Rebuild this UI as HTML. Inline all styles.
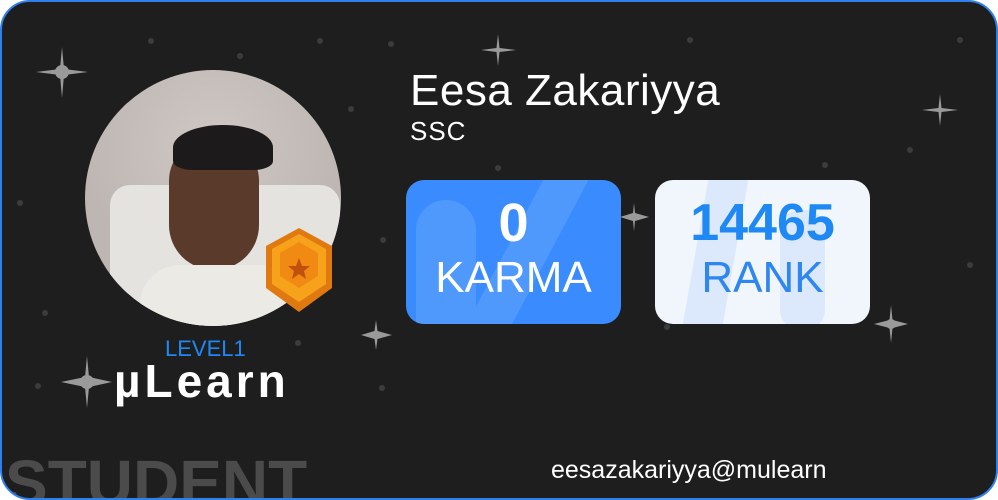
<!DOCTYPE html>
<html><head><meta charset="utf-8"><style>
*{margin:0;padding:0;box-sizing:border-box}
body{width:998px;height:500px;background:#fff;overflow:hidden;font-family:"Liberation Sans",sans-serif}
.card{position:absolute;left:0;top:0;width:998px;height:500px;background:#1e1e1e;border:2px solid #2f80ed;border-radius:30px;overflow:hidden}
.t{position:absolute;white-space:nowrap}
.box{position:absolute;top:178px;width:215px;height:144px;border-radius:18px;overflow:hidden;text-align:center}
</style></head><body>
<div class="card">
<svg width="998" height="500" style="position:absolute;left:-2px;top:-2px">
<g fill="#9a9a9a">
<path d="M62 47 L64 69 L88 72 L64 75 L62 98 L60 75 L36 72 L60 69Z"/>
<path d="M498 34 L499.5 48 L516 50 L499.5 52 L498 66 L496.5 52 L481 50 L496.5 48Z"/>
<path d="M940 94 L941.5 108 L958 110 L941.5 112 L940 126 L938.5 112 L922 110 L938.5 108Z"/>
<path d="M634 203 L635 213 L649 217 L635 221 L634 231 L633 221 L620 217 L633 213Z"/>
<path d="M891 305 L892.5 320 L908 324 L892.5 328 L891 343 L889.5 328 L874 324 L889.5 320Z"/>
<path d="M376 320 L377.5 331 L392 335 L377.5 339 L376 350 L374.5 339 L361 335 L374.5 331Z"/>
<path d="M87 356 L89 377 L112 382 L89 387 L87 408 L85 387 L61 382 L85 377Z"/>
</g>
<g fill="#9a9a9a"><circle cx="62" cy="72" r="7"/><circle cx="87" cy="382" r="7"/><circle cx="891" cy="324" r="5"/></g>
<g fill="#3c3c3c"><circle cx="151" cy="41" r="3"/><circle cx="240" cy="56" r="3"/><circle cx="320" cy="41" r="3"/><circle cx="391" cy="44" r="3"/><circle cx="351" cy="109" r="3"/><circle cx="20" cy="203" r="3"/><circle cx="45" cy="313" r="3"/><circle cx="383" cy="240" r="3"/><circle cx="298" cy="343" r="3"/><circle cx="382" cy="388" r="3"/><circle cx="38" cy="386" r="3"/><circle cx="498" cy="168" r="3"/><circle cx="825" cy="165" r="3"/><circle cx="667" cy="327" r="3"/><circle cx="910" cy="150" r="3"/><circle cx="970" cy="265" r="3"/><circle cx="960" cy="40" r="3"/><circle cx="690" cy="40" r="3"/></g>
</svg>
<div style="position:absolute;left:83px;top:68px;width:256px;height:256px;border-radius:50%;background:radial-gradient(circle at 50% 30%,#cfc8c4,#bdb6b2 60%);overflow:hidden">
 <div style="position:absolute;left:25px;top:115px;width:230px;height:160px;background:#e4e3df;border-radius:20px"></div>
 <div style="position:absolute;left:84px;top:70px;width:90px;height:130px;background:#5a3a2b;border-radius:45px 45px 50px 50px"></div>
 <div style="position:absolute;left:88px;top:55px;width:100px;height:45px;background:#1c1a1a;border-radius:50% 50% 20% 20%"></div>
 <div style="position:absolute;left:55px;top:195px;width:170px;height:80px;background:#eceae4;border-radius:40px 40px 0 0"></div>
</div>
<svg style="position:absolute;left:258px;top:224px" width="78" height="90" viewBox="0 0 78 90">
<polygon points="39,2 72,20 72,62 39,86 6,62 6,20" fill="#e07a10"/>
<polygon points="39,8 66,23 66,58 39,76 12,58 12,23" fill="#f7a21b"/>
<polygon points="39,16 58,27 58,50 39,62 20,50 20,27" fill="#f08a12"/>
<polygon points="39,32 42,40 50,40 44,45 46,53 39,48 32,53 34,45 28,40 36,40" fill="#c0500e"/>
</svg>
<div class="t" style="left:163px;top:334px;font-size:22px;color:#1e88f5">LEVEL1</div>
<div class="t" style="left:112px;top:352px;font-size:46px;font-weight:bold;color:#fff;letter-spacing:4px">µLearn</div>
<div class="t" style="left:3px;top:444px;font-size:64px;font-weight:bold;color:#4b4b4b">STUDENT</div>
<div class="t" style="left:408px;top:64px;font-size:44px;color:#fff;letter-spacing:0.5px">Eesa Zakariyya</div>
<div class="t" style="left:408px;top:114px;font-size:26px;color:#fff;letter-spacing:1px">SSC</div>
<div class="box" style="left:404px;background:#3a8bfd">
 <div style="position:absolute;left:10px;top:20px;width:60px;height:160px;border-radius:30px;background:#4f99fd"></div>
 <div style="position:absolute;left:100px;top:-20px;width:40px;height:190px;background:#4f99fd;transform:rotate(28deg)"></div>
 <div style="position:relative;color:#fff;font-size:54px;font-weight:bold;margin-top:14px;line-height:58px">0</div>
 <div style="position:relative;color:#fff;font-size:44px;line-height:48px;margin-top:2px">KARMA</div>
</div>
<div class="box" style="left:653px;background:#f1f5fc">
 <div style="position:absolute;left:40px;top:0;width:40px;height:150px;background:#dce8fb;transform:skewX(-10deg)"></div>
 <div style="position:absolute;left:125px;top:30px;width:45px;height:120px;border-radius:20px;background:#dce8fb"></div>
 <div style="position:relative;color:#1e88f5;font-size:52px;font-weight:bold;margin-top:14px;line-height:58px">14465</div>
 <div style="position:relative;color:#2e86f0;font-size:44px;line-height:48px;margin-top:2px">RANK</div>
</div>
<div class="t" style="left:549px;top:454px;font-size:25px;color:#fff">eesazakariyya@mulearn</div>
</div>
</body></html>
